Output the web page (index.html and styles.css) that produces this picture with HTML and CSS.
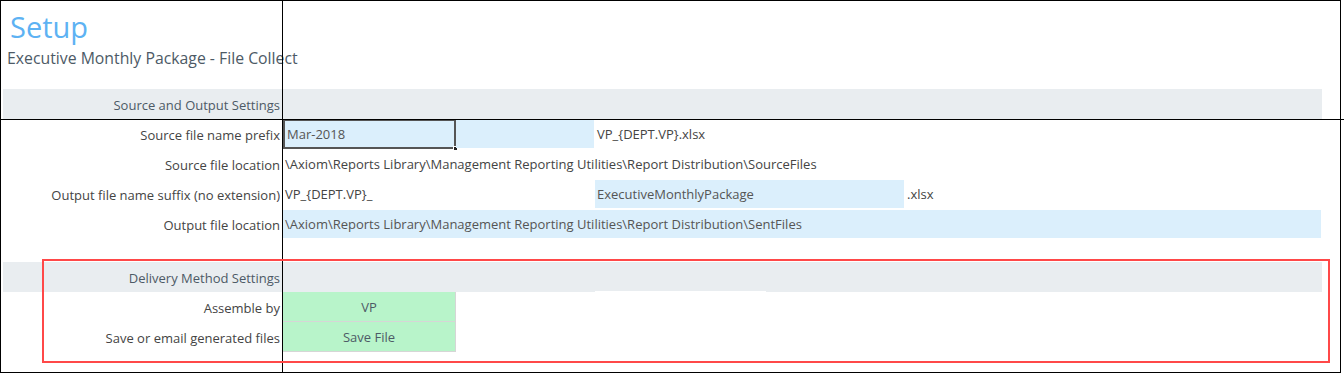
FILE: index.html
```html
<!DOCTYPE html>
<html>
<meta charset="utf-8">
<head>
  <link rel="stylesheet" href="styles.css">
</head>
<body>
  <div class="sheet">
    <div class="heading">
      <h1 class="title">Setup</h1>
      <div class="subtitle">Executive Monthly Package - File Collect</div>
    </div>

    <div class="grid">
      <div class="band label">Source and Output Settings</div>
      <div class="band span-rest"></div>

      <div class="label">Source file name prefix</div>
      <div class="cell input selected">Mar-2018<span class="handle"></span></div>
      <div class="cell input"></div>
      <div class="cell span-3">VP_{DEPT.VP}.xlsx</div>

      <div class="label">Source file location</div>
      <div class="cell span-all">\Axiom\Reports Library\Management Reporting Utilities\Report Distribution\SourceFiles</div>

      <div class="label">Output file name suffix (no extension)</div>
      <div class="cell span-2">VP_{DEPT.VP}_</div>
      <div class="cell input span-2">ExecutiveMonthlyPackage</div>
      <div class="cell">.xlsx</div>

      <div class="label">Output file location</div>
      <div class="cell input span-all">\Axiom\Reports Library\Management Reporting Utilities\Report Distribution\SentFiles</div>

      <div class="spacer"></div>

      <div class="band label">Delivery Method Settings</div>
      <div class="band span-2"></div>
      <div class="band band-gap"></div>
      <div class="band span-2"></div>

      <div class="label">Assemble by</div>
      <div class="cell choice">VP</div>
      <div class="filler"></div>

      <div class="label">Save or email generated files</div>
      <div class="cell choice">Save File</div>
      <div class="filler"></div>
    </div>
  </div>

  <!-- freeze pane lines and the review marker sit on top of the sheet -->
  <div class="freeze-v"></div>
  <div class="freeze-h"></div>
  <div class="marker"></div>
</body>
</html>
```

FILE: styles.css
```css
body {
  margin: 0;
  padding: 0;
  position: relative;
  width: 1344px;
  height: 373px;
  overflow: hidden;
  background: #fff;
  font-family: "Open Sans", "Noto Sans", sans-serif;
  font-size: 13px;
  color: #444;
}

.sheet {
  box-sizing: border-box;
  width: 1341px;
  height: 373px;
  border: 1px solid #000;
}

.heading {
  height: 88px;
}

.title {
  margin: 0;
  padding: 9px 0 0 9px;
  font-size: 29px;
  font-weight: 400;
  line-height: 34px;
  color: #5db2f3;
}

.subtitle {
  padding: 4px 0 0 6px;
  font-size: 15.8px;
  line-height: 20px;
  color: #4d5a66;
}

.grid {
  display: grid;
  grid-template-columns: 282px 173px 139px 171px 139px 417px;
  grid-template-rows: repeat(5, 30px) 23px repeat(3, 30px);
}

.label {
  box-sizing: border-box;
  padding: 2px 3px 0 0;
  text-align: right;
  line-height: 28px;
  white-space: nowrap;
}

.band {
  background: #e9edf0;
  color: #4d5a66;
}

.band.label {
  margin-left: 2px;
}

.band-gap {
  margin-bottom: 1px;
}

.cell {
  position: relative;
  padding: 1px 0 0 2px;
  line-height: 27px;
  white-space: nowrap;
  border: 1px solid transparent;
  border-left: 0;
}

.input {
  background-color: #dbeffc;
  background-clip: padding-box;
  color: #555;
}

.selected {
  border: 2px solid #555;
  padding-top: 0;
  line-height: 27px;
}

.handle {
  position: absolute;
  right: -4px;
  bottom: -4px;
  width: 5px;
  height: 5px;
  background: #222;
  border: 1px solid #fff;
  box-sizing: border-box;
}

.span-rest,
.span-all {
  grid-column: 2 / 7;
}

.span-2 {
  grid-column: span 2;
}

.span-3 {
  grid-column: span 3;
}

.spacer {
  grid-column: 1 / 7;
}

.choice {
  background: #b8f4ca;
  border: 1px solid #d6d6d6;
  border-top: 0;
  border-left: 0;
  padding: 1px 0 0;
  text-align: center;
  color: #4d5a66;
  line-height: 28px;
}

.filler {
  grid-column: 3 / 7;
}

.freeze-v {
  position: absolute;
  left: 282px;
  top: 0;
  width: 1px;
  height: 373px;
  background: #000;
}

.freeze-h {
  position: absolute;
  left: 0;
  top: 119px;
  width: 1344px;
  height: 1px;
  background: #000;
}

.marker {
  position: absolute;
  left: 42px;
  top: 259px;
  width: 1288px;
  height: 104px;
  box-sizing: border-box;
  border: 2px solid #ff4848;
}
```
